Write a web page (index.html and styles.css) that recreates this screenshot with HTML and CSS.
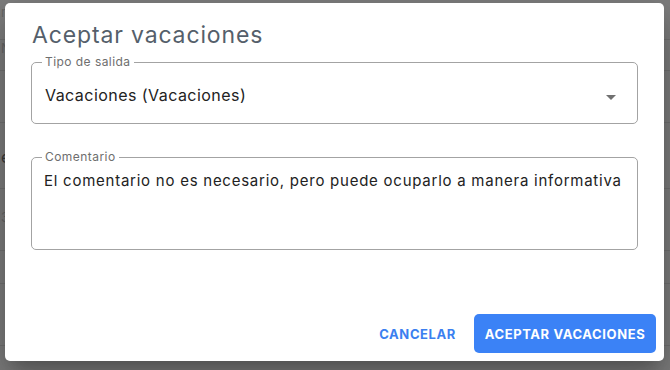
FILE: index.html
```html
<!DOCTYPE html>
<html lang="es">
<head>
<meta charset="utf-8">
<title>Aceptar vacaciones</title>
<link rel="stylesheet" href="styles.css">
</head>
<body>
  <div class="page">
    <div class="row r1"><span class="peek">r</span></div>
    <div class="row r2"><span class="peek">N</span></div>
    <div class="row r3"></div>
    <div class="row r4"><span class="peek">e</span></div>
    <div class="row r5"><span class="peek">3</span></div>
    <div class="row r6"></div>
    <div class="row r7"></div>
  </div>

  <div class="dialog" role="dialog">
    <div class="content">
      <h2 class="title">Aceptar vacaciones</h2>
      <fieldset class="field select">
        <legend>Tipo de salida</legend>
        <div class="select-row">
          <span class="value">Vacaciones (Vacaciones)</span>
          <svg class="arrow" width="10" height="5" viewBox="0 0 10 5"><path d="M0 0 L10 0 L5 5 Z"/></svg>
        </div>
      </fieldset>
      <fieldset class="field comment">
        <legend>Comentario</legend>
        <div class="value">El comentario no es necesario, pero puede ocuparlo a manera informativa</div>
      </fieldset>
    </div>
    <div class="actions">
      <button class="btn btn-text">CANCELAR</button>
      <button class="btn btn-primary">ACEPTAR VACACIONES</button>
    </div>
  </div>
</body>
</html>
```

FILE: styles.css
```css
html, body {
  margin: 0;
  padding: 0;
}
body {
  width: 670px;
  height: 370px;
  overflow: hidden;
  background: #7e7e7e;
  font-family: Inter, "Noto Sans", sans-serif;
  position: relative;
}
.page {
  display: flex;
  flex-direction: column;
  height: 370px;
}
.row {
  border-bottom: 1px solid #727272;
  box-sizing: border-box;
  color: #666;
  font-size: 13px;
}
.r1 { height: 40px; }
.r2 { height: 31px; }
.r3 { height: 52px; }
.r4 { height: 66px; }
.r5 { height: 62px; }
.r6 { height: 33px; }
.r7 { height: 62px; }
.peek {
  display: block;
  padding-left: 1px;
}
.r1 .peek { padding-top: 4px; }
.r2 .peek { padding-top: 0; }
.r4 .peek { padding-top: 24px; font-size: 16px; color: #3a3a3a; }
.r5 .peek { padding-top: 20px; }

.dialog {
  position: absolute;
  left: 5px;
  top: 3px;
  width: 659px;
  height: 358px;
  background: #fff;
  border-radius: 5px;
  box-shadow: 0 11px 15px -7px rgba(0,0,0,0.2), 0 24px 38px 3px rgba(0,0,0,0.14), 0 9px 46px 8px rgba(0,0,0,0.12);
  display: flex;
  flex-direction: column;
  box-sizing: border-box;
}
.content {
  padding: 0 26px;
  display: flex;
  flex-direction: column;
}
.title {
  margin: 17px 0 0 1px;
  font-size: 23px;
  line-height: 30px;
  font-weight: 400;
  color: #555f6b;
  letter-spacing: 0.85px;
}
.field {
  margin: 0;
  border: 1px solid #a3a3a3;
  border-radius: 5px;
  padding: 0 13px;
  box-sizing: border-box;
}
.field legend {
  font-size: 12px;
  line-height: 12px;
  letter-spacing: 0.45px;
  color: #6e6e6e;
  padding: 0 3px;
  margin-left: -3px;
}
.select {
  margin-top: 6px;
  height: 68px;
}
.select-row {
  display: flex;
  align-items: center;
  justify-content: space-between;
  height: 54px;
  padding-right: 8px;
}
.value {
  font-size: 16px;
  color: #222;
  letter-spacing: 0.45px;
}
.arrow {
  fill: #707070;
  margin-top: 4px;
}
.comment {
  margin-top: 27px;
  height: 99px;
}
.comment .value {
  font-size: 15px;
  line-height: 22px;
  letter-spacing: 0.75px;
  white-space: nowrap;
  padding-top: 7px;
  margin-left: -1px;
}
.actions {
  margin-top: auto;
  display: flex;
  justify-content: flex-end;
  align-items: center;
  gap: 10px;
  padding: 0 8px 8px;
}
.btn {
  font-family: Inter, "Noto Sans", sans-serif;
  font-weight: 700;
  font-size: 13px;
  letter-spacing: 0.6px;
  border: none;
  height: 39px;
  border-radius: 5px;
  cursor: pointer;
}
.btn-text {
  background: transparent;
  color: #3b7ff0;
  padding: 0 8px;
}
.btn-primary {
  background: #3b82f6;
  color: #fff;
  padding: 0 8px;
  width: 182px;
}
```
